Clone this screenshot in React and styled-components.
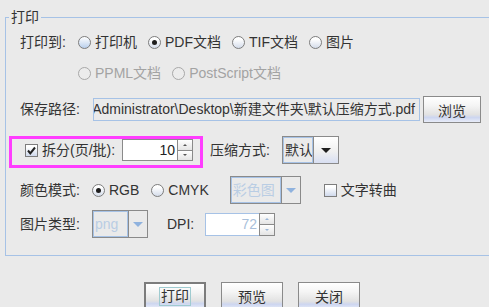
import React from "react";
import styled, { createGlobalStyle } from "styled-components";

const GlobalStyle = createGlobalStyle`
  html, body {
    margin: 0;
    padding: 0;
    background: #eaeaea;
  }
  body {
    font-family: "Liberation Sans", "Noto Sans CJK SC", sans-serif;
    font-size: 14px;
    color: #333;
  }
`;

const Page = styled.div`
  width: 489px;
  height: 307px;
  overflow: hidden;
  padding-top: 10px;
  box-sizing: border-box;
`;

const Group = styled.fieldset`
  margin: 0 0 0 5px;
  padding: 0;
  border: 1px solid #a6c2e6;
  width: 540px;
  min-width: 0;
  box-sizing: border-box;
`;

const Legend = styled.legend`
  margin-left: 3px;
  padding: 0 2px;
  font-size: 14px;
  line-height: 14px;
`;

const Body = styled.div`
  padding: 0 0 17px 14px;
`;

const Row = styled.div`
  display: flex;
  align-items: ${(p) => p.$align || "center"};
  height: ${(p) => p.$h}px;
  margin-top: ${(p) => p.$top}px;
  margin-left: ${(p) => p.$left || 0}px;
  white-space: nowrap;
`;

const Label = styled.span`
  width: ${(p) => p.$w}px;
  margin-left: ${(p) => p.$ml || 0}px;
  flex: none;
  line-height: ${(p) => p.$lh || 17}px;
  color: ${(p) => (p.$disabled ? "#a3a3a3" : "#333")};
`;

const Options = styled.div`
  display: flex;
  align-items: center;
  gap: ${(p) => p.$gap || 12}px;
`;

const Option = styled.label`
  display: inline-flex;
  align-items: center;
  gap: 4px;
  margin-left: ${(p) => p.$ml || 0}px;
  line-height: 17px;
  color: ${(p) => (p.$disabled ? "#a3a3a3" : "#333")};
`;

const RadioDot = styled.span`
  position: relative;
  width: 13px;
  height: 13px;
  box-sizing: border-box;
  border-radius: 50%;
  border: 1px solid ${(p) => (p.$disabled ? "#a8a8a8" : "#7d7d7d")};
  background: ${(p) =>
    p.$disabled
      ? "#ececec"
      : p.$focus
      ? "linear-gradient(#ffffff, #b9cfec)"
      : "linear-gradient(#ffffff 20%, #d4dcea)"};
  flex: none;
  &::after {
    content: "";
    display: ${(p) => (p.$on ? "block" : "none")};
    position: absolute;
    left: 3px;
    top: 3px;
    width: 5px;
    height: 5px;
    border-radius: 50%;
    background: #1e1e1e;
  }
`;

const Box = styled.span`
  display: inline-flex;
  align-items: center;
  justify-content: center;
  width: 13px;
  height: 13px;
  box-sizing: border-box;
  border: 1px solid #7d7d7d;
  background: linear-gradient(#ffffff 20%, #cfd9ec);
  flex: none;
`;

const Radio = ({ on, focus, disabled, children }) => (
  <Option $disabled={disabled}>
    <RadioDot $on={on} $focus={focus} $disabled={disabled} />
    {children}
  </Option>
);

const Check = ({ on, ml, children }) => (
  <Option $ml={ml}>
    <Box>
      {on && (
        <svg width="11" height="11" viewBox="0 0 11 11">
          <path d="M2 5.5 L4.3 8.3 L9 2.5" fill="none" stroke="#222" strokeWidth="2" />
        </svg>
      )}
    </Box>
    {children}
  </Option>
);

const PathField = styled.div`
  width: 327px;
  height: 23px;
  box-sizing: border-box;
  border: 1px solid #a6c2e6;
  display: flex;
  align-items: center;
  justify-content: flex-end;
  padding-right: 4px;
  overflow: hidden;
  flex: none;
  line-height: 17px;
`;

const Button = styled.button`
  width: ${(p) => p.$w || 62}px;
  height: ${(p) => p.$h || 28}px;
  margin-left: ${(p) => p.$ml || 0}px;
  padding: 0;
  box-sizing: border-box;
  border: ${(p) => (p.$default ? "2px solid #7c7c7c" : "1px solid #8a8a8a")};
  background: linear-gradient(
    #ffffff 0%,
    #f4f4f4 35%,
    #e2e2e2 70%,
    #cdd6f0 82%,
    #e8ecf8 100%
  );
  font: inherit;
  color: #333;
  display: flex;
  align-items: center;
  justify-content: center;
  flex: none;
`;

const FocusRing = styled.span`
  border: 1px solid #9fcbd0;
  padding: 0 1px;
  line-height: 17px;
`;

const Marked = styled.div`
  display: flex;
  align-items: center;
  height: 22px;
  padding: 0 7px 4px 13px;
  border: 3px solid #ff3dff;
  flex: none;
`;

const Spinner = styled.div`
  display: flex;
  height: ${(p) => p.$h}px;
  margin-left: ${(p) => p.$ml || 0}px;
  flex: none;
`;

const SpinField = styled.div`
  width: ${(p) => p.$w}px;
  box-sizing: border-box;
  background: #fff;
  border: 1px solid ${(p) => (p.$disabled ? "#a6c2e6" : "#8a8a8a")};
  border-right: none;
  display: flex;
  align-items: center;
  justify-content: flex-end;
  padding-right: 2px;
  color: ${(p) => (p.$disabled ? "#a9bfda" : "#222")};
  line-height: 17px;
`;

const SpinButtons = styled.div`
  width: 16px;
  display: flex;
  flex-direction: column;
`;

const SpinHalf = styled.div`
  flex: 1;
  border: 1px solid #8a8a8a;
  margin-top: ${(p) => (p.$down ? "-1px" : 0)};
  background: linear-gradient(#ffffff, #e4e4e4);
  display: flex;
  align-items: center;
  justify-content: center;
  &::before {
    content: "";
    border-left: 2px solid transparent;
    border-right: 2px solid transparent;
    ${(p) => (p.$down ? "border-top" : "border-bottom")}: 2px solid
      ${(p) => (p.$disabled ? "#9ab6d8" : "#555")};
  }
`;

const Combo = styled.div`
  display: flex;
  height: 28px;
  margin-left: ${(p) => p.$ml || 0}px;
  box-sizing: border-box;
  border: 1px solid #8a8a8a;
  flex: none;
`;

const ComboText = styled.div`
  width: ${(p) => p.$w}px;
  box-sizing: border-box;
  border: 1px solid #a6c2e6;
  display: flex;
  align-items: center;
  padding-left: 1px;
  overflow: hidden;
  line-height: 17px;
  color: ${(p) => (p.$disabled ? "#b9cde4" : "#333")};
`;

const ComboArrow = styled.div`
  width: ${(p) => p.$w}px;
  border-left: 1px solid #8a8a8a;
  background: ${(p) =>
    p.$disabled ? "#eaeaea" : "linear-gradient(#ffffff, #f0f0f0 55%, #d8dff2)"};
  display: flex;
  align-items: center;
  justify-content: center;
  &::before {
    content: "";
    border-left: 5px solid transparent;
    border-right: 5px solid transparent;
    border-top: 5px solid ${(p) => (p.$disabled ? "#8fb2de" : "#1e1e1e")};
  }
`;

const Footer = styled.div`
  display: flex;
  margin-top: 26px;
  padding-left: 144px;
  gap: 15px;
`;

const NumSpinner = ({ value, w, h, ml, disabled }) => (
  <Spinner $h={h} $ml={ml}>
    <SpinField $w={w} $disabled={disabled}>
      {value}
    </SpinField>
    <SpinButtons>
      <SpinHalf $disabled={disabled} />
      <SpinHalf $down $disabled={disabled} />
    </SpinButtons>
  </Spinner>
);

export default function App() {
  return (
    <Page>
      <GlobalStyle />
      <Group>
        <Legend>打印</Legend>
        <Body>
          <Row $h={22} $top={7}>
            <Label $w={58}>打印到:</Label>
            <Options $gap={11}>
              <Radio focus>打印机</Radio>
              <Radio on>PDF文档</Radio>
              <Radio>TIF文档</Radio>
              <Radio>图片</Radio>
            </Options>
          </Row>
          <Row $h={22} $top={9} $left={58}>
            <Options $gap={11}>
              <Radio disabled>PPML文档</Radio>
              <Radio disabled>PostScript文档</Radio>
            </Options>
          </Row>
          <Row $h={27} $top={12}>
            <Label $w={73}>保存路径:</Label>
            <PathField>Administrator\Desktop\新建文件夹\默认压缩方式.pdf</PathField>
            <Button $w={58} $h={27} $ml={3}>
              浏览
            </Button>
          </Row>
          <Row $h={32} $top={13} $left={-11} $align="flex-start">
            <Marked>
              <Check on>拆分(页/批):</Check>
              <NumSpinner value="10" w={55} h={22} ml={7} />
            </Marked>
            <Label $w={72} $ml={7} $lh={28}>
              压缩方式:
            </Label>
            <Combo>
              <ComboText $w={30}>默认</ComboText>
              <ComboArrow $w={24} />
            </Combo>
          </Row>
          <Row $h={28} $top={8}>
            <Label $w={72}>颜色模式:</Label>
            <Options $gap={12}>
              <Radio on>RGB</Radio>
              <Radio>CMYK</Radio>
            </Options>
            <Combo $ml={21}>
              <ComboText $w={50} $disabled>
                彩色图
              </ComboText>
              <ComboArrow $w={18} $disabled />
            </Combo>
            <Check ml={23}>文字转曲</Check>
          </Row>
          <Row $h={28} $top={6}>
            <Label $w={72}>图片类型:</Label>
            <Combo>
              <ComboText $w={35} $disabled>
                png
              </ComboText>
              <ComboArrow $w={18} $disabled />
            </Combo>
            <Label $w={38} $ml={19}>
              DPI:
            </Label>
            <NumSpinner value="72" w={54} h={23} disabled />
          </Row>
        </Body>
      </Group>
      <Footer>
        <Button $default>
          <FocusRing>打印</FocusRing>
        </Button>
        <Button>预览</Button>
        <Button>关闭</Button>
      </Footer>
    </Page>
  );
}
